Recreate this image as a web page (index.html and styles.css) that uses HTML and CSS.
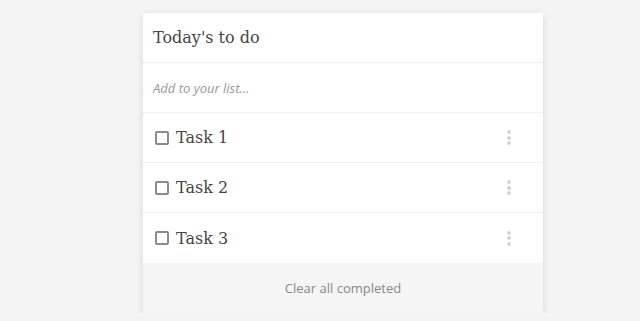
FILE: index.html
```html
<!DOCTYPE html>
<html lang="en">
<head>
<meta charset="UTF-8">
<meta name="viewport" content="width=device-width, initial-scale=1.0">
<title>Today's to do</title>
<link rel="stylesheet" href="styles.css">
</head>
<body>
  <div class="card">
    <div class="row header">Today's to do</div>
    <div class="row add">
      <input class="add-input" type="text" placeholder="Add to your list...">
    </div>
    <ul class="task-list">
      <li class="row task"><span class="check"></span><span class="task-name">Task 1</span><span class="dots"><i></i><i></i><i></i></span></li>
      <li class="row task"><span class="check"></span><span class="task-name">Task 2</span><span class="dots"><i></i><i></i><i></i></span></li>
      <li class="row task last"><span class="check"></span><span class="task-name">Task 3</span><span class="dots"><i></i><i></i><i></i></span></li>
    </ul>
    <div class="footer">Clear all completed</div>
  </div>
</body>
</html>
```
FILE: styles.css
```css
body {
  margin: 0;
  padding: 0;
  background-color: #f4f4f4;
  font-family: "DejaVu Serif", serif;
}

.card {
  width: 400px;
  margin: 13px 0 0 143px;
  background-color: #fff;
  box-shadow: 0 2px 8px rgba(0, 0, 0, 0.12);
}

.row {
  height: 49px;
  border-bottom: 1px solid #f1f1f1;
  display: flex;
  align-items: center;
  padding: 0 10px;
}

.header {
  font-size: 16px;
  color: #444;
}

.add-input {
  border: none;
  outline: none;
  width: 100%;
  padding: 0;
  font-family: "Open Sans", sans-serif;
  font-style: italic;
  font-size: 13px;
  color: #444;
}

.add-input::placeholder {
  color: #999;
}

.task-list {
  list-style: none;
  margin: 0;
  padding: 0;
}

.task.last {
  border-bottom: none;
  height: 50px;
}

.check {
  width: 10px;
  height: 10px;
  border: 2px solid #8a8a92;
  border-radius: 2px;
  margin-left: 2px;
  margin-right: 7px;
}

.task-name {
  flex: 1;
  font-size: 16px;
  color: #444;
}

.dots {
  display: flex;
  flex-direction: column;
  gap: 1.5px;
  margin-right: 22px;
}

.dots i {
  width: 4px;
  height: 4px;
  border-radius: 50%;
  background-color: #d4d4d4;
}

.footer {
  height: 50px;
  background-color: #f5f5f5;
  display: flex;
  align-items: center;
  justify-content: center;
  font-family: "Open Sans", sans-serif;
  font-size: 13px;
  color: #888;
}
```
